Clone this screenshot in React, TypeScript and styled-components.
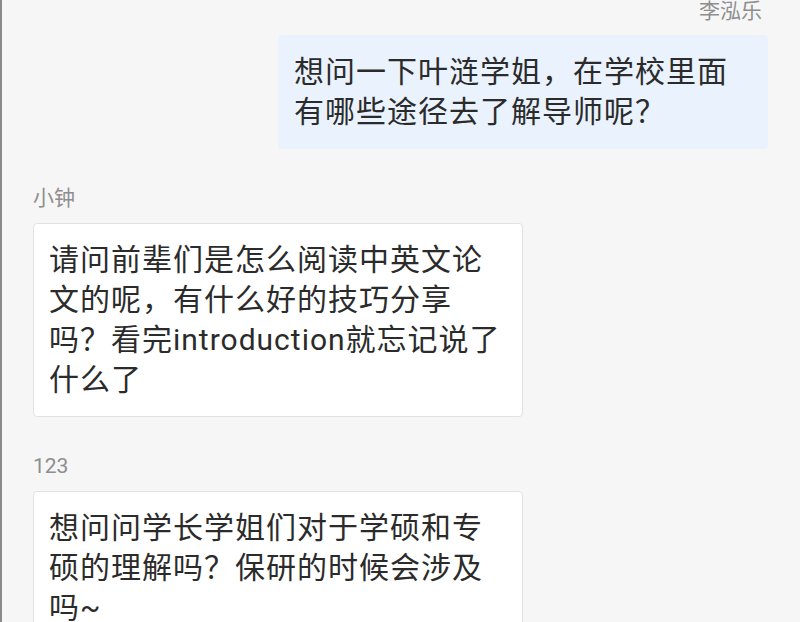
import styled, { createGlobalStyle } from "styled-components"

const GlobalStyle = createGlobalStyle`
    html, body {
        margin: 0;
        padding: 0;
        background-color: #f6f6f6;
    }
    * {
        box-sizing: border-box;
    }
`

type Message = {
    id: number
    sender: string
    text: string
    mine?: boolean
}

const messages: Message[] = [
    { id: 1, sender: "李泓乐", text: "想问一下叶涟学姐，在学校里面有哪些途径去了解导师呢？", mine: true },
    { id: 2, sender: "小钟", text: "请问前辈们是怎么阅读中英文论文的呢，有什么好的技巧分享吗？看完introduction就忘记说了什么了" },
    { id: 3, sender: "123", text: "想问问学长学姐们对于学硕和专硕的理解吗？保研的时候会涉及吗~" },
]

export default function App() {
    return (
        <>
            <GlobalStyle />
            <StyledChat>
                {messages.map((m) => (
                    <StyledGroup key={m.id} $mine={m.mine}>
                        <StyledSender $mine={m.mine}>{m.sender}</StyledSender>
                        <StyledBubble $mine={m.mine}>{m.text}</StyledBubble>
                    </StyledGroup>
                ))}
            </StyledChat>
        </>
    )
}

const StyledChat = styled.div`
    height: 622px;
    overflow: hidden;
    border-left: 2px solid #8a8a8a;
    background-color: #f6f6f6;
    padding: 0 32px 0 31px;
    display: flex;
    flex-direction: column;
    gap: 37px;
    font-family: Roboto, "Noto Sans CJK SC", sans-serif;
`

const StyledGroup = styled.div<{ $mine?: boolean }>`
    display: flex;
    flex-direction: column;
    align-items: ${(p) => (p.$mine ? "flex-end" : "flex-start")};
    gap: ${(p) => (p.$mine ? "12px" : "13px")};
    flex-shrink: 0;
`

const StyledSender = styled.div<{ $mine?: boolean }>`
    font-size: 21px;
    line-height: 24px;
    color: #8e8e8e;
    margin-top: ${(p) => (p.$mine ? "-1px" : "0")};
    padding-right: ${(p) => (p.$mine ? "6px" : "0")};
`

const StyledBubble = styled.div<{ $mine?: boolean }>`
    max-width: 490px;
    padding: 16px 15px;
    font-size: 30px;
    line-height: 40px;
    letter-spacing: 1px;
    color: #2b2b2b;
    border-radius: 4px;
    background-color: ${(p) => (p.$mine ? "#e9f2fd" : "#ffffff")};
    border: 1px solid ${(p) => (p.$mine ? "#e9f2fd" : "#e2e2e2")};
`
